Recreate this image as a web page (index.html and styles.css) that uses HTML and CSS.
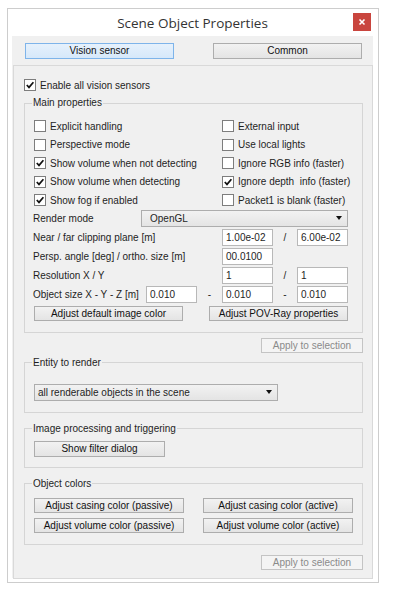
FILE: index.html
```html
<!DOCTYPE html>
<html lang="en">
<head>
    <meta charset="utf-8" />
    <title>Scene Object Properties</title>
    <link rel="stylesheet" href="styles.css">
</head>
<body>
    <div class="window">
        <!--标题栏-->
        <div class="titlebar">
            <span></span>
            <span class="title">Scene Object Properties</span>
            <span class="close">
                <svg width="8" height="8" viewBox="0 0 8 8"><path d="M1.5 1.5 L6.5 6.5 M6.5 1.5 L1.5 6.5" stroke="#fff" stroke-width="1.6" /></svg>
            </span>
        </div>
        <div class="client">
            <div class="tabs">
                <div class="btn tab current">Vision sensor</div>
                <div class="btn tab">Common</div>
            </div>
            <div class="panel">
                <div class="check-row">
                    <span class="box"><svg width="10" height="10" viewBox="0 0 10 10"><path d="M1.8 5 L4 7.4 L8.4 2.2" /></svg></span>Enable all vision sensors
                </div>

                <fieldset class="group main">
                    <legend>Main properties</legend>
                    <div class="checks">
                        <div class="check-row"><span class="box"></span>Explicit handling</div>
                        <div class="check-row"><span class="box"></span>External input</div>
                        <div class="check-row"><span class="box"></span>Perspective mode</div>
                        <div class="check-row"><span class="box"></span>Use local lights</div>
                        <div class="check-row"><span class="box"><svg width="10" height="10" viewBox="0 0 10 10"><path d="M1.8 5 L4 7.4 L8.4 2.2" /></svg></span>Show volume when not detecting</div>
                        <div class="check-row"><span class="box"></span>Ignore RGB info (faster)</div>
                        <div class="check-row"><span class="box"><svg width="10" height="10" viewBox="0 0 10 10"><path d="M1.8 5 L4 7.4 L8.4 2.2" /></svg></span>Show volume when detecting</div>
                        <div class="check-row"><span class="box"><svg width="10" height="10" viewBox="0 0 10 10"><path d="M1.8 5 L4 7.4 L8.4 2.2" /></svg></span>Ignore depth&nbsp; info (faster)</div>
                        <div class="check-row"><span class="box"><svg width="10" height="10" viewBox="0 0 10 10"><path d="M1.8 5 L4 7.4 L8.4 2.2" /></svg></span>Show fog if enabled</div>
                        <div class="check-row"><span class="box"></span>Packet1 is blank (faster)</div>
                    </div>

                    <div class="field-row">
                        <span class="label l-render">Render mode</span>
                        <div class="combo c-render">OpenGL<span class="arrow"></span></div>
                    </div>
                    <div class="field-row">
                        <span class="label l-wide">Near / far clipping plane [m]</span>
                        <span class="input">1.00e-02</span>
                        <span class="sep s2">/</span>
                        <span class="input">6.00e-02</span>
                    </div>
                    <div class="field-row">
                        <span class="label l-wide">Persp. angle [deg] / ortho. size [m]</span>
                        <span class="input">00.0100</span>
                    </div>
                    <div class="field-row">
                        <span class="label l-wide">Resolution X / Y</span>
                        <span class="input">1</span>
                        <span class="sep s2">/</span>
                        <span class="input">1</span>
                    </div>
                    <div class="field-row">
                        <span class="label l-size">Object size X - Y - Z [m]</span>
                        <span class="input">0.010</span>
                        <span class="sep s1">-</span>
                        <span class="input">0.010</span>
                        <span class="sep s2">-</span>
                        <span class="input">0.010</span>
                    </div>
                    <div class="btn-row">
                        <div class="btn b-image">Adjust default image color</div>
                        <div class="btn b-pov">Adjust POV-Ray properties</div>
                    </div>
                </fieldset>

                <div class="apply-row">
                    <div class="btn apply">Apply to selection</div>
                </div>

                <fieldset class="group entity">
                    <legend>Entity to render</legend>
                    <div class="combo c-entity">all renderable objects in the scene<span class="arrow"></span></div>
                </fieldset>

                <fieldset class="group filter">
                    <legend>Image processing and triggering</legend>
                    <div class="btn b-filter">Show filter dialog</div>
                </fieldset>

                <fieldset class="group colors">
                    <legend>Object colors</legend>
                    <div class="color-grid">
                        <div class="btn">Adjust casing color (passive)</div>
                        <div class="btn">Adjust casing color (active)</div>
                        <div class="btn">Adjust volume color (passive)</div>
                        <div class="btn">Adjust volume color (active)</div>
                    </div>
                </fieldset>

                <div class="apply-row last">
                    <div class="btn apply">Apply to selection</div>
                </div>
            </div>
        </div>
    </div>
</body>
</html>
```

FILE: styles.css
```css
* {
    margin: 0;
    padding: 0;
    box-sizing: border-box;
}

body {
    background-color: #fff;
    font: 10px "Liberation Sans", Arial, sans-serif;
    color: #1e1e1e;
}

.window {
    width: 372px;
    margin: 8px 0 0 7px;
    padding: 0 5px 4px 4px;
    border: 1px solid #cdcdcd;
    background-color: #fff;
}

/* 标题栏 */
.titlebar {
    height: 27px;
    display: grid;
    grid-template-columns: 1fr auto 1fr;
    align-items: center;
}

    .titlebar .title {
        font: 13.5px "Open Sans", "Liberation Sans", sans-serif;
        color: #333;
        padding-top: 1px;
    }

    .titlebar .close {
        justify-self: end;
        align-self: start;
        width: 18px;
        height: 18px;
        margin: 4px 2px 0 0;
        background-color: #c9453e;
        display: flex;
        align-items: center;
        justify-content: center;
    }

.client {
    height: 542px;
    padding-top: 7px;
    background-color: #f0f0f0;
}

.tabs {
    display: flex;
    gap: 39px;
    padding-left: 13px;
    margin-bottom: 6px;
}

/* 按钮 */
.btn {
    height: 15px;
    line-height: 13px;
    text-align: center;
    border: 1px solid #adadad;
    background: linear-gradient(#f2f2f2, #e4e4e4);
    color: #111;
    white-space: nowrap;
}

    .btn.tab {
        width: 149px;
        height: 16px;
        line-height: 14px;
    }

        .btn.tab.current {
            border-color: #7eb4ea;
            background: linear-gradient(#e6f1fc, #d6e8fa);
        }

    .btn.apply {
        width: 102px;
        border-color: #c4c4c4;
        background: #f4f4f4;
        color: #8a8a8a;
    }

.panel {
    width: 360px;
    margin-left: 1px;
    padding: 10px 9px 8px 10px;
    border: 1px solid #d9d9d9;
}

/* 复选框 */
.check-row {
    display: flex;
    align-items: center;
    height: 18px;
    white-space: nowrap;
}

.box {
    width: 12px;
    height: 12px;
    margin-right: 4px;
    border: 1px solid #7d7d7d;
    background-color: #fff;
    display: flex;
    align-items: center;
    justify-content: center;
    flex-shrink: 0;
}

    .box svg path {
        fill: none;
        stroke: #111;
        stroke-width: 1.7;
    }

/* 分组框 */
.group {
    border: 1px solid #d5d5d5;
    padding: 8px 0 11px 9px;
}

    .group legend {
        margin-left: -2px;
        padding: 0 1px;
        line-height: 12px;
    }

.main {
    margin-top: 3px;
}

    .main .check-row {
        height: 18.5px;
        margin-right: 4px;
    }

.checks {
    display: grid;
    grid-template-columns: 188px auto;
}

.field-row {
    display: flex;
    align-items: center;
    height: 17px;
    margin-top: 2px;
}

.checks + .field-row {
    margin-top: 0;
}

.label {
    margin-left: -1px;
    white-space: nowrap;
}

.l-render {
    width: 108px;
}

.l-wide {
    width: 189px;
}

.l-size {
    width: 113px;
}

.input {
    width: 51px;
    height: 17px;
    line-height: 15px;
    padding-left: 3px;
    border: 1px solid #b8b8b8;
    background-color: #fff;
}

.sep {
    text-align: center;
}

.s1 {
    width: 25px;
}

.s2 {
    width: 24px;
}

.combo {
    height: 17px;
    line-height: 15px;
    padding-left: 8px;
    border: 1px solid #adadad;
    background: linear-gradient(#f2f2f2, #e4e4e4);
    display: flex;
    justify-content: space-between;
    align-items: center;
}

    .combo .arrow {
        width: 0;
        height: 0;
        margin-right: 5px;
        border-left: 3.5px solid transparent;
        border-right: 3.5px solid transparent;
        border-top: 4px solid #111;
    }

.c-render {
    width: 207px;
}

.c-entity {
    width: 244px;
    padding-left: 3px;
}

.btn-row {
    display: flex;
    margin-top: 3px;
}

.b-image {
    width: 149px;
}

.b-pov {
    width: 139px;
    margin-left: 26px;
}

.apply-row {
    display: flex;
    justify-content: flex-end;
    margin-top: 5px;
}

    .apply-row.last {
        margin-top: 10px;
    }

.entity {
    margin-top: 4px;
    padding-top: 15px;
}

.filter {
    margin-top: 10px;
    padding: 6px 0 10px 9px;
}

.b-filter {
    width: 131px;
    height: 16px;
    line-height: 14px;
}

.colors {
    margin-top: 10px;
}

.color-grid {
    display: grid;
    grid-template-columns: 150px 150px;
    column-gap: 19px;
    row-gap: 5px;
}
```
